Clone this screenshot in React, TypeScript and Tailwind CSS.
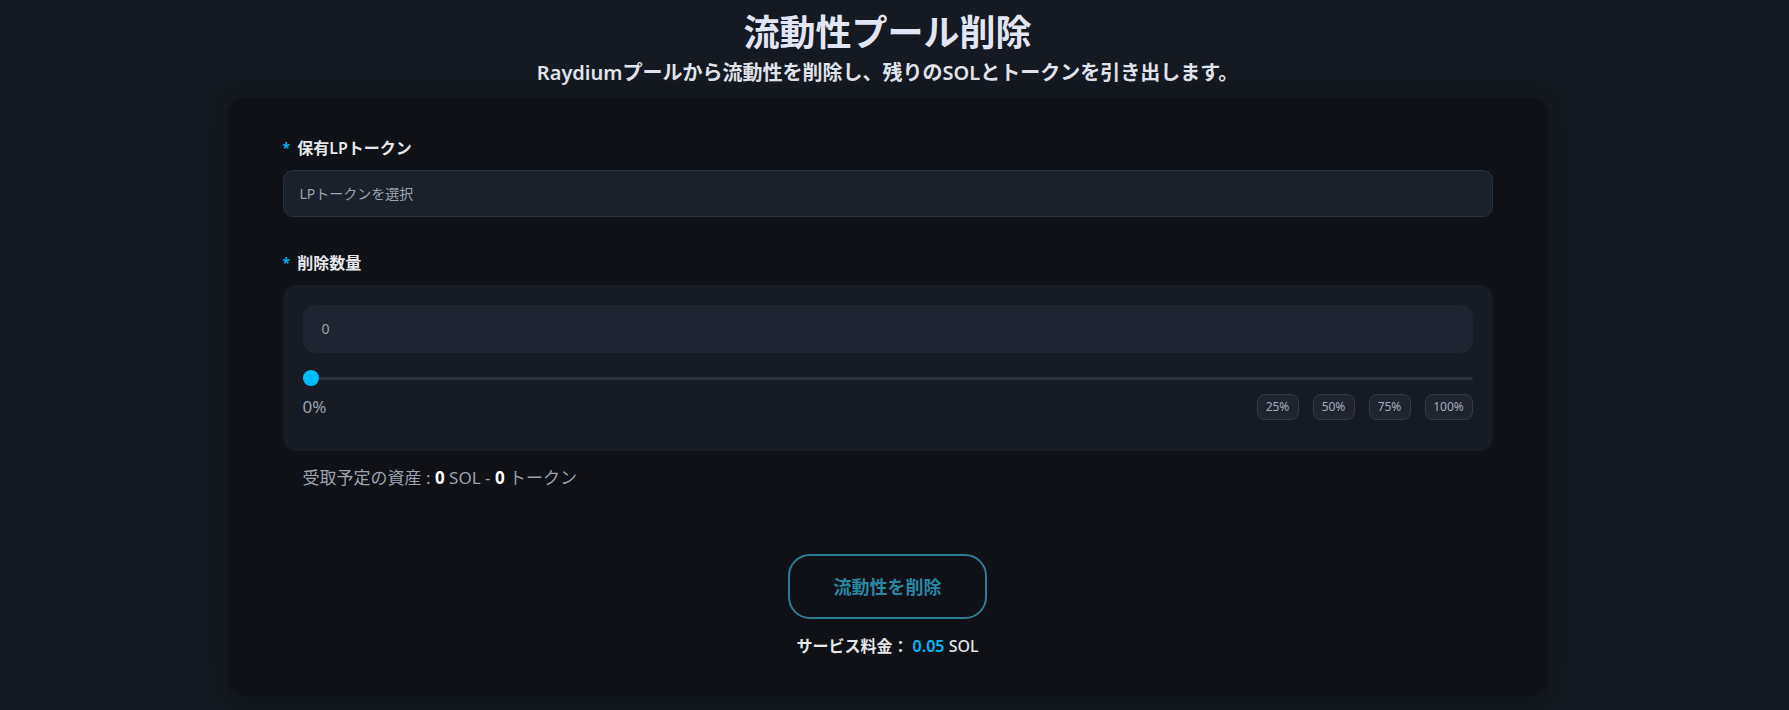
export default function App() {
  const presets = [
    { label: '25%', w: 'w-[42px]' },
    { label: '50%', w: 'w-[42px]' },
    { label: '75%', w: 'w-[42px]' },
    { label: '100%', w: 'w-[48px]' },
  ];

  return (
    <div
      className="min-h-screen bg-[#151a22] pr-[14px] pt-[13px] pb-4"
      style={{ fontFamily: '"Noto Sans", "Noto Sans CJK JP", sans-serif' }}
    >
      <div className="flex flex-col items-center">
        <h1 className="text-4xl font-bold leading-10 text-[#e2e5f3]">流動性プール削除</h1>
        <p className="mt-[6px] text-xl font-semibold leading-7 text-[#e1e4ec]">
          Raydiumプールから流動性を削除し、残りのSOLとトークンを引き出します。
        </p>

        <div className="mt-[11px] w-[1320px] rounded-2xl bg-[#0f1117] px-[55px] pt-[38px] pb-[38px] shadow-[0_0_24px_rgba(0,0,0,0.35)]">
          {/* LP token select */}
          <div className="flex items-center gap-[7px] text-base font-semibold leading-6 text-[#e5e7eb]">
            <span className="text-sm text-sky-400">*</span>
            <span>保有LPトークン</span>
          </div>
          <div className="mt-[10px] flex h-[47px] items-center rounded-[10px] border border-[#2a303b] bg-[#1b212b] px-4 text-sm text-[#9ca3af]">
            LPトークンを選択
          </div>

          {/* amount */}
          <div className="mt-[34px] flex items-center gap-[7px] text-base font-semibold leading-6 text-[#e5e7eb]">
            <span className="text-sm text-sky-400">*</span>
            <span>削除数量</span>
          </div>
          <div className="mt-[10px] rounded-[14px] bg-[#161b24] px-5 pt-5 pb-[31px]">
            <div className="flex h-12 items-center rounded-xl bg-[#1e2430] pl-[19px] text-sm text-[#9ca3af]">0</div>

            <div className="relative mt-[17px] flex h-4 items-center">
              <div className="h-[3px] w-full rounded-full bg-[#2c323d]" />
              <div className="absolute left-0 top-0 h-4 w-4 rounded-full bg-sky-400" />
            </div>

            <div className="mt-2 flex h-[26px] items-center justify-between">
              <span className="text-[17px] text-[#9ca3af]">0%</span>
              <div className="flex gap-[14px]">
                {presets.map((p) => (
                  <button
                    key={p.label}
                    className={`${p.w} h-[26px] rounded-lg border border-[#353b46] bg-[#1f242e] text-xs text-[#a3aabb]`}
                  >
                    {p.label}
                  </button>
                ))}
              </div>
            </div>
          </div>

          <div className="mt-[15px] pl-5 text-[17px] leading-6 text-[#9ca3af]">
            受取予定の資産 : <span className="font-bold text-white">0</span> SOL -{' '}
            <span className="font-bold text-white">0</span> トークン
          </div>

          {/* submit */}
          <div className="mt-[64px] flex flex-col items-center">
            <button className="h-[65px] w-[199px] rounded-[22px] border-2 border-[#2f7d94] text-lg font-bold text-[#2a87a3]">
              流動性を削除
            </button>
            <div className="mt-[15px] text-base leading-6 font-bold text-[#e5e7eb]">
              サービス料金： <span className="font-semibold text-sky-400">0.05</span>{' '}
              <span className="font-medium">SOL</span>
            </div>
          </div>
        </div>
      </div>
    </div>
  );
}
